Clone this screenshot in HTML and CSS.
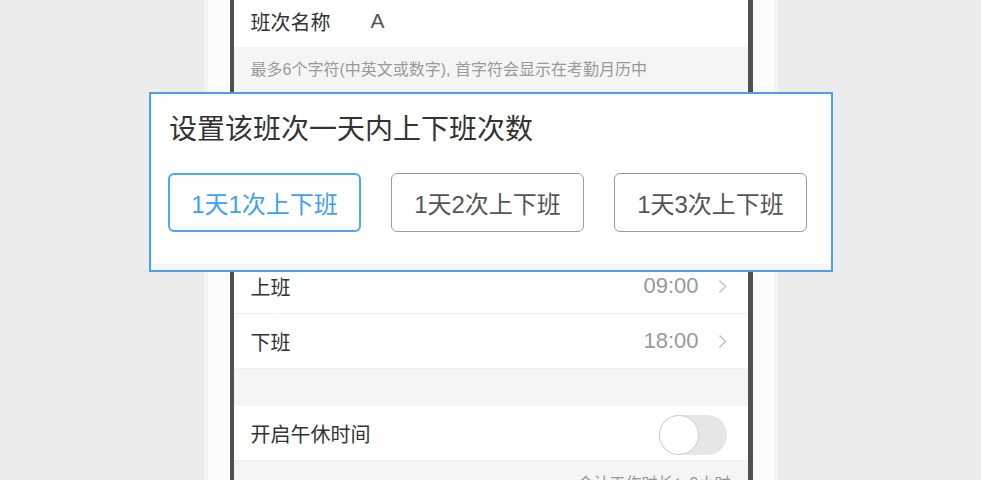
FILE: index.html
```html
<!DOCTYPE html>
<html lang="zh">
    <head>
        <meta charset="UTF-8">
        <meta name="viewport" content="width=device-width, initial-scale=1.0">
        <title>班次设置</title>
        <link rel="stylesheet" href="styles.css">
    </head>
    <body>
        <div id="phone">
            <div class="shell">
                <div class="screen">
                    <div class="row first">
                        <label>班次名称</label>
                        <span class="name">A</span>
                    </div>
                    <div class="hint">最多6个字符(中英文或数字), 首字符会显示在考勤月历中</div>
                    <!-- covered by the dialog -->
                    <div class="gap hidden"></div>
                    <div class="row">
                        <label>上班</label>
                        <span class="value">09:00</span>
                        <svg class="arrow" width="9" height="15" viewBox="0 0 9 15"><polyline points="1.5,1.5 7.5,7.5 1.5,13.5" fill="none" stroke="#c4c4c4" stroke-width="1.6"/></svg>
                    </div>
                    <div class="row">
                        <label>下班</label>
                        <span class="value">18:00</span>
                        <svg class="arrow" width="9" height="15" viewBox="0 0 9 15"><polyline points="1.5,1.5 7.5,7.5 1.5,13.5" fill="none" stroke="#c4c4c4" stroke-width="1.6"/></svg>
                    </div>
                    <div class="gap"></div>
                    <div class="row">
                        <label>开启午休时间</label>
                        <span class="switch"><span class="knob"></span></span>
                    </div>
                    <div class="total">合计工作时长：9小时</div>
                </div>
            </div>
        </div>

        <div id="dialog">
            <h2>设置该班次一天内上下班次数</h2>
            <div class="options">
                <button type="button" class="active">1天1次上下班</button>
                <button type="button">1天2次上下班</button>
                <button type="button">1天3次上下班</button>
            </div>
        </div>
    </body>
</html>
```

FILE: styles.css
```css
* {
    margin: 0;
    padding: 0;
    box-sizing: border-box;
    font-family: "Liberation Sans", "Noto Sans CJK SC", sans-serif;
}

html, body {
    height: 100%;
    overflow: hidden;
}

body {
    background: #ececec;
    color: #333;
}

#phone {
    width: 574px;
    height: 100%;
    margin: 0 auto;
    padding: 0 4px;
    background: #f4f4f4;
}
.shell {
    height: 100%;
    padding: 0 21px 0 22px;
    background: #fcfcfc;
}
.screen {
    height: 100%;
    background: #f5f5f5;
    border-left: 4px solid #505050;
    border-right: 5px solid #505050;
}

.row {
    display: flex;
    align-items: center;
    height: 55px;
    padding: 0 21px 0 17px;
    background: #fff;
    border-bottom: 1px solid #efefef;
    font-size: 20px;
}
.row.first {
    height: 47px;
    padding-bottom: 5px;
    border-bottom: 0;
}
.row label {
    width: 120px;
    flex: none;
}
.row .name {
    color: #555;
    font-size: 21px;
}
.row .value {
    margin-left: auto;
    color: #999;
    font-size: 22px;
}
.arrow {
    margin-left: 19px;
    flex: none;
}

.hint {
    height: 45px;
    line-height: 45px;
    padding-left: 17px;
    font-size: 16px;
    color: #9a9a9a;
}

.gap {
    height: 37px;
}
.gap.hidden {
    height: 167px;
}

.switch {
    margin-left: auto;
    margin-top: 3px;
    width: 68px;
    height: 40px;
    border-radius: 20px;
    background: #e6e6e7;
    display: flex;
    align-items: center;
}
.knob {
    width: 40px;
    height: 40px;
    border-radius: 50%;
    background: #fff;
    border: 1.5px solid #cfcfcf;
}

.total {
    text-align: right;
    padding: 9px 17px 0 0;
    font-size: 16px;
    color: #999;
}

#dialog {
    position: absolute;
    left: 149px;
    top: 92px;
    width: 684px;
    height: 180px;
    background: #fff;
    border: 2px solid #4a9ff5;
    box-shadow: inset 0 -6px 0 #f6f6f6;
    padding: 16px 23px 0 17px;
}
#dialog h2 {
    font-size: 28px;
    line-height: 40px;
    font-weight: normal;
    color: #333;
    padding-left: 1px;
}
.options {
    display: grid;
    grid-template-columns: repeat(3, 193px);
    column-gap: 30px;
    margin-top: 23px;
}
.options button {
    height: 59px;
    border: 1.5px solid #9c9c9c;
    border-radius: 6px;
    background: #fff;
    color: #555;
    font-size: 24px;
}
.options button.active {
    border: 2px solid #4aa8f7;
    color: #3ca2f2;
}
```
